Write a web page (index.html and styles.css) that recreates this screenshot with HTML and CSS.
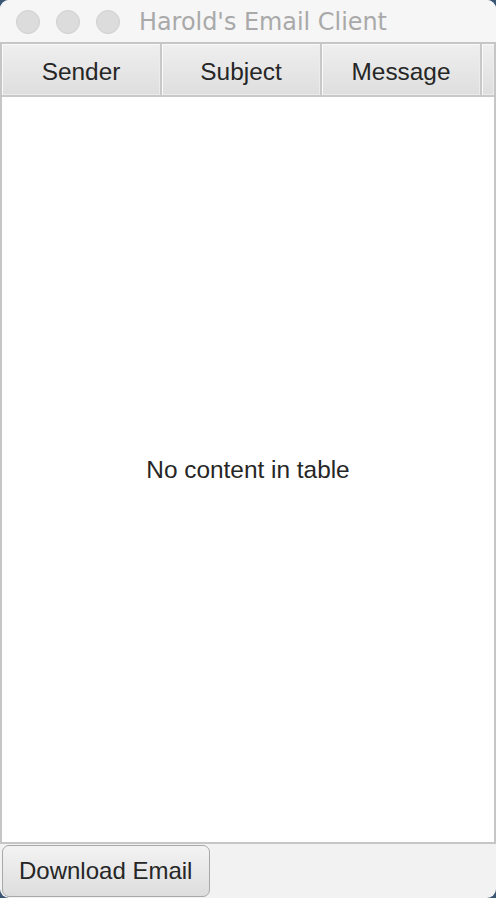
FILE: index.html
```html
<!DOCTYPE html>
<html>
<head>
<meta charset="utf-8">
<link rel="stylesheet" href="styles.css">
</head>
<body>
<div class="window">
  <div class="titlebar">
    <div class="lights">
      <span class="light"></span>
      <span class="light"></span>
      <span class="light"></span>
    </div>
    <div class="title">Harold's Email Client</div>
  </div>
  <div class="table">
    <div class="header">
      <div class="col">Sender</div>
      <div class="col">Subject</div>
      <div class="col">Message</div>
      <div class="col filler"></div>
    </div>
    <div class="tbody">No content in table</div>
  </div>
  <div class="bottom">
    <button class="btn">Download Email</button>
  </div>
</div>
</body>
</html>
```
FILE: styles.css
```css
html, body {
  margin: 0;
  padding: 0;
  background: #3b5673;
}
.window {
  width: 496px;
  height: 898px;
  display: flex;
  flex-direction: column;
  background: #f2f2f2;
  border-radius: 9px;
  overflow: hidden;
  font-family: "Liberation Sans", Arial, sans-serif;
}
.titlebar {
  height: 42px;
  flex: none;
  display: flex;
  align-items: center;
  background: #f6f6f6;
}
.lights {
  display: flex;
  gap: 16px;
  padding-left: 16px;
  padding-top: 1px;
}
.light {
  width: 22px;
  height: 22px;
  border-radius: 50%;
  background: #dcdcdc;
  border: 1px solid #d0d0d0;
}
.title {
  margin-left: 19px;
  font-family: "DejaVu Sans", sans-serif;
  font-size: 23.9px;
  color: #a9a9a9;
  padding-top: 1px;
}
.table {
  flex: 1;
  display: flex;
  flex-direction: column;
  border: 2px solid #c6c6c6;
  background: #fff;
}
.header {
  height: 51px;
  flex: none;
  display: flex;
  border-bottom: 2px solid #c9c9c9;
}
.col {
  width: 160px;
  flex: none;
  border-right: 2px solid #c8c8c8;
  background: linear-gradient(#efefef, #dedede);
  box-shadow: inset 1px 1px 0 #f9f9f9, inset -1px -1px 0 #ececec;
  display: flex;
  align-items: center;
  justify-content: center;
  padding-top: 4px;
  box-sizing: border-box;
  font-size: 24.4px;
  color: #262626;
}
.filler {
  flex: 1;
  width: auto;
  border-right: none;
}
.tbody {
  flex: 1;
  display: flex;
  align-items: center;
  justify-content: center;
  font-size: 24.4px;
  color: #262626;
}
.bottom {
  height: 54px;
  flex: none;
  padding: 1px 2px 1px 2px;
  box-sizing: border-box;
  display: flex;
  align-items: stretch;
}
.btn {
  width: 208px;
  margin: 0;
  border: 1.5px solid #a8a8a8;
  border-radius: 7px;
  background: linear-gradient(#f3f3f3, #dddddd);
  font-family: "Liberation Sans", Arial, sans-serif;
  font-size: 24px;
  color: #262626;
  text-align: left;
  padding: 0 0 0 16px;
}
```
